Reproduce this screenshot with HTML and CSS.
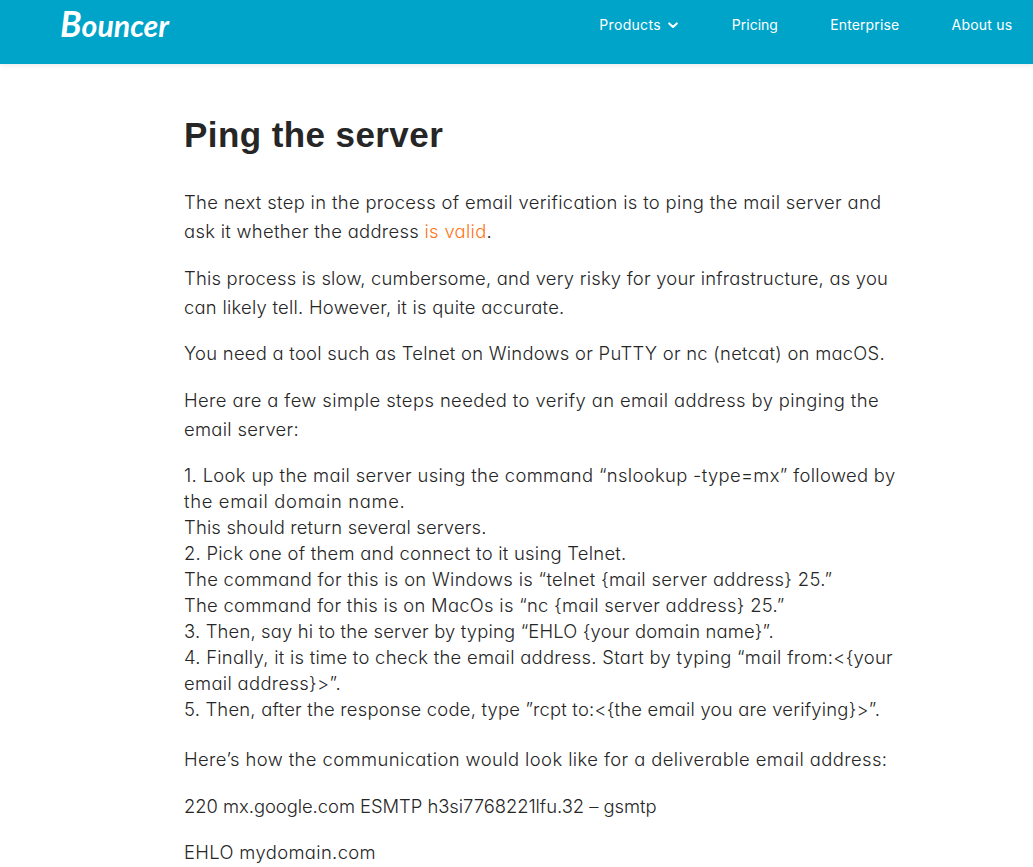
FILE: index.html
```html
<!DOCTYPE html>
<html lang="en">
<head>
<meta charset="utf-8">
<title>Bouncer</title>
<link rel="stylesheet" href="styles.css">
</head>
<body>
<header class="bar">
  <svg class="logo" width="116" height="52" viewBox="0 0 116 52" role="img" aria-label="Bouncer"><text x="2" y="37" textLength="109" lengthAdjust="spacingAndGlyphs"><tspan class="cap">B</tspan>ouncer</text></svg>
  <nav class="nav">
    <a class="products"><span class="n1">Products</span><svg class="chevron" width="10" height="7" viewBox="0 0 10 7"><path d="M1.2 1.4 5 5 8.8 1.4"/></svg></a>
    <a>Pricing</a>
    <a class="n2">Enterprise</a>
    <a class="n3">About us</a>
  </nav>
</header>
<main class="article">
  <h1>Ping the server</h1>
  <p><span class="t34">The next step in the process of email verification is to ping the mail server and</span><br>
  <span class="t30">ask it whether the address <a class="link">is valid</a>.</span></p>
  <p><span class="t22">This process is slow, cumbersome, and very risky for your infrastructure, as you</span><br>
  <span class="t26">can likely tell. However, it is quite accurate.</span></p>
  <p><span class="t27">You need a tool such as Telnet on Windows or PuTTY or nc (netcat) on macOS.</span></p>
  <p><span class="t41">Here are a few simple steps needed to verify an email address by pinging the</span><br>
  <span class="t31">email server:</span></p>
  <p class="list"><span class="t35">1. Look up the mail server using the command “nslookup -type=mx” followed by</span><br>
  <span class="t66">the email domain name.</span><br>
  <span class="t18">This should return several servers.</span><br>
  <span class="t27">2. Pick one of them and connect to it using Telnet.</span><br>
  <span class="t31">The command for this is on Windows is “telnet {mail server address} 25.”</span><br>
  <span class="t28">The command for this is on MacOs is “nc {mail server address} 25.”</span><br>
  <span class="t18">3. Then, say hi to the server by typing “EHLO {your domain name}”.</span><br>
  <span class="t28">4. Finally, it is time to check the email address. Start by typing “mail from:&lt;{your</span><br>
  <span class="t34">email address}&gt;”.</span><br>
  <span class="t22">5. Then, after the response code, type ”rcpt to:&lt;{the email you are verifying}&gt;”.</span></p>
  <p><span class="t42">Here’s how the communication would look like for a deliverable email address:</span></p>
  <p><span class="t0">220 mx.google.com ESMTP h3si7768221lfu.32 – gsmtp</span></p>
  <p><span class="t37">EHLO mydomain.com</span></p>
</main>
</body>
</html>
```
FILE: styles.css
```css
body {
  margin: 0;
  height: 867px;
  overflow: hidden;
  background: #fff;
  color: #262626;
  font: 300 18.4px/29px Inter, "Noto Sans", sans-serif;
  font-feature-settings: "cv11";
}

.bar {
  box-sizing: border-box;
  height: 64px;
  padding: 0 20.5px 0 58px;
  background: #00a4c9;
  color: #fff;
  display: flex;
  justify-content: space-between;
  align-items: flex-start;
  box-shadow: 0 1px 6px rgba(0, 0, 0, 0.1);
}

.logo {
  font: italic 700 31px Lato, sans-serif;
  fill: #fff;
}
.cap { font-size: 36px; }

.nav {
  display: flex;
  gap: 52.3px;
  padding-top: 10px;
  font-size: 14px;
  font-weight: 400;
}
.products { display: flex; align-items: center; gap: 7px; margin-right: 1.7px; }
.chevron { margin-top: 2px; fill: none; stroke: #fff; stroke-width: 2; stroke-linecap: round; stroke-linejoin: round; }
.n1 { letter-spacing: 0.305px; }
.n2 { letter-spacing: 0.12px; }
.n3 { letter-spacing: 0.238px; }

.article { padding: 41px 0 0 184px; }

h1 {
  margin: 0 0 23px;
  font: 700 35px/60px "Liberation Sans", sans-serif;
  letter-spacing: 0.42px;
}
p { margin: 0 0 17.7px; white-space: nowrap; }
.list { line-height: 26px; margin-bottom: 23.3px; }
.link { color: #ff7518; }

/* Per-line tracking */
.t0 { letter-spacing: -0.031px; }
.t18 { letter-spacing: 0.184px; }
.t22 { letter-spacing: 0.223px; }
.t26 { letter-spacing: 0.258px; }
.t27 { letter-spacing: 0.27px; }
.t28 { letter-spacing: 0.283px; }
.t30 { letter-spacing: 0.31px; }
.t31 { letter-spacing: 0.315px; }
.t34 { letter-spacing: 0.339px; }
.t35 { letter-spacing: 0.346px; }
.t37 { letter-spacing: 0.365px; }
.t41 { letter-spacing: 0.407px; }
.t42 { letter-spacing: 0.419px; }
.t66 { letter-spacing: 0.665px; }
```
